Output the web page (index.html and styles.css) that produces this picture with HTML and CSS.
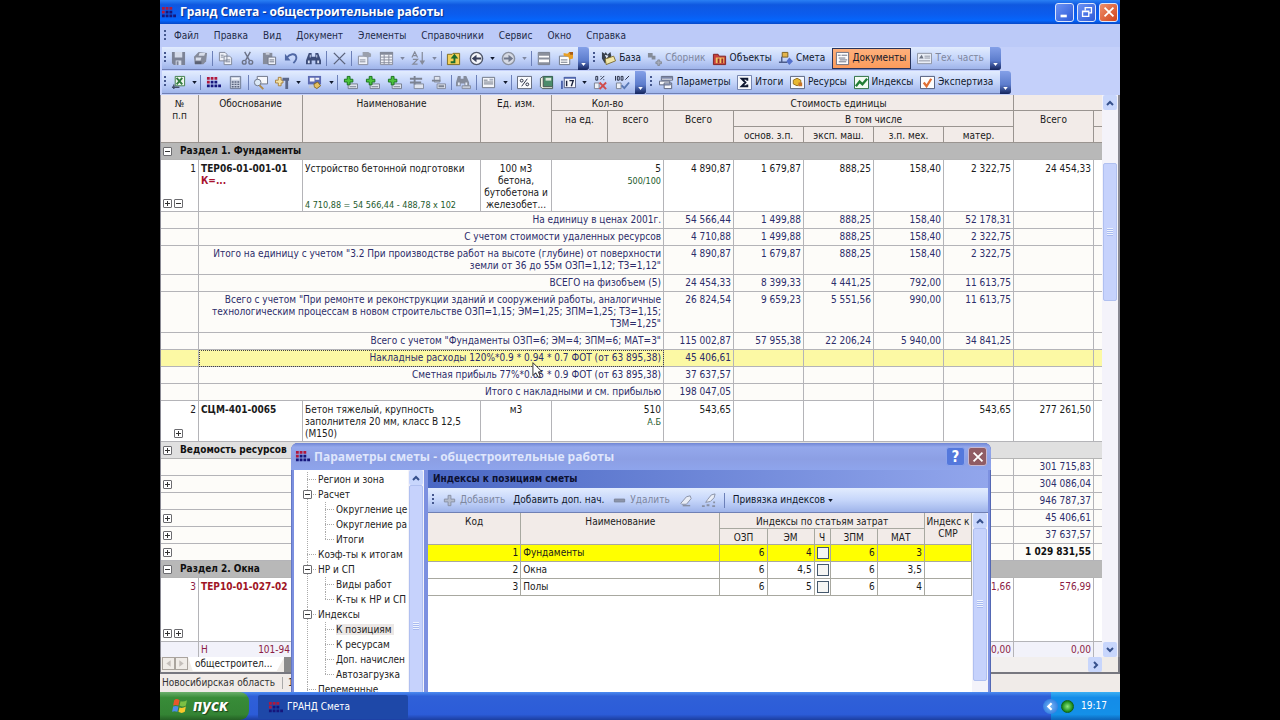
FILE: index.html
```html
<!DOCTYPE html>
<html lang="ru">
<head>
    <meta charset="UTF-8">
    <title>Гранд Смета</title>
    <link rel="stylesheet" href="styles.css">
</head>
<body>

    <!-- Icon sprite -->
    <svg class="sprite" xmlns="http://www.w3.org/2000/svg">
        <symbol id="i-logo" viewBox="0 0 16 16">
            <path fill="#b0183c" d="M1 2h3v3H1zM5 2h3v3H5zM9 2h3v3H9zM1 6h3v3H1z"/>
            <path fill="#16167c" d="M5 6h3v3H5zM9 6h3v3H9zM5 10h3v3H5zM9 10h3v3H9zM13 10h3v3h-3zM1 10h3v3H1z"/>
        </symbol>
        <symbol id="i-save" viewBox="0 0 16 16">
            <path fill="#7c8396" d="M1 1h14v14H3l-2-2z"/><path fill="#d4dbea" d="M4 1h8v6H4zM5 10h6v5H5z"/><path fill="#7c8396" d="M6 11h2v4H6z"/>
        </symbol>
        <symbol id="i-saveall" viewBox="0 0 16 16">
            <path fill="#858b9a" d="M6 1l9 1-1 9-3 3H2L1 6z"/><path fill="#d8deea" d="M7 2h6l-1 3H6zM3 7h6l-1 3H3z"/><path fill="#5c6374" d="M2 11h7v3H2z"/>
        </symbol>
        <symbol id="i-copy" viewBox="0 0 16 16">
            <path fill="#eef1f8" stroke="#7f8698" d="M1.500 1.500h6l2 2v7h-8zM6.500 5.500h6l2 2v7h-8z"/><path stroke="#7f8698" d="M8 9.500h5M8 11.500h5M3 4.500h3M3 6.500h3"/>
        </symbol>
        <symbol id="i-cut" viewBox="0 0 16 16">
            <path fill="none" stroke="#6c7388" stroke-width="1.500" d="M5 1l5 9M11 1L6 10"/><circle cx="4.500" cy="12" r="2" fill="none" stroke="#6c7388" stroke-width="1.500"/><circle cx="11.500" cy="12" r="2" fill="none" stroke="#6c7388" stroke-width="1.500"/>
        </symbol>
        <symbol id="i-paste" viewBox="0 0 16 16">
            <path fill="#868c9b" d="M1 2h10v12H1z"/><path fill="#c9cfdd" d="M4 1h4v3H4z"/><path fill="#eef1f8" stroke="#6f7688" d="M6.500 6.500h8v8h-8z"/><path stroke="#6f7688" d="M8 9.500h5M8 11.500h5"/>
        </symbol>
        <symbol id="i-undo" viewBox="0 0 16 16">
            <path fill="none" stroke="#5068a4" stroke-width="2" d="M3 7c3-4 9-5 10-1 1 3-1 5-3 7"/><path fill="#5068a4" d="M1 3v7h6z"/>
        </symbol>
        <symbol id="i-find" viewBox="0 0 16 16">
            <path fill="#3c4c78" d="M3 2h3v4h4V2h3l3 8v4h-6v-4H6v4H0v-4z"/><path fill="#d7e0f4" d="M2 10h2v3H2zM12 10h2v3h-2zM4 4h1v3H4zM11 4h1v3h-1z"/>
        </symbol>
        <symbol id="i-findg" viewBox="0 0 16 16">
            <path fill="#858c9c" d="M2 1h3v3h3V1h3l3 7v4H9V9H5v3H0V8z"/><path fill="#e4e9f4" d="M2 8h2v3H2zM10 8h2v3h-2z"/><path fill="#c6ccd8" stroke="#858c9c" d="M6.500 11.500h9v3h-9z"/>
        </symbol>
        <symbol id="i-del" viewBox="0 0 16 16">
            <path fill="none" stroke="#5c647c" stroke-width="1.500" d="M2 2l12 12M14 2L2 14"/>
        </symbol>
        <symbol id="i-prop" viewBox="0 0 16 16">
            <path fill="#eef1f8" stroke="#858b9a" d="M1.500 5.500h10v9h-10z"/><path fill="#9aa0ad" d="M6 1h6l3 2v3l-4 1-5-2z"/><path stroke="#858b9a" d="M3 9.500h6M3 11.500h6"/>
        </symbol>
        <symbol id="i-grid" viewBox="0 0 16 16">
            <path fill="#f2f4f9" stroke="#858b9a" d="M1.500 1.500h13v13h-13z"/><path fill="#858b9a" d="M1 1h14v3H1z"/><path stroke="#858b9a" d="M2 6.500h12M2 9.500h12M2 12.500h12M5.500 4v10M10.500 4v10"/>
        </symbol>
        <symbol id="i-sort" viewBox="0 0 16 16">
            <path fill="none" stroke="#858b9a" stroke-width="1.300" d="M1 7l3-6 3 6M2 5h4M2 9h5l-5 5h5M12 1v12"/><path fill="#858b9a" d="M9 10h6l-3 5z"/>
        </symbol>
        <symbol id="i-up" viewBox="0 0 16 16">
            <path fill="#f1cf58" stroke="#7c6a20" d="M1.500 3.500h5l1-1h7v12h-13z"/><path fill="none" stroke="#1c6c2c" stroke-width="2" d="M5 12h4V7"/><path fill="#1c6c2c" d="M5 8l4-5 4 5z"/>
        </symbol>
        <symbol id="i-back" viewBox="0 0 16 16">
            <circle cx="8" cy="8" r="6.500" fill="#f4f6fa" stroke="#50586c" stroke-width="1.500"/><path fill="#38405c" d="M3 8l5-4v3h5v2H8v3z"/>
        </symbol>
        <symbol id="i-fwd" viewBox="0 0 16 16">
            <circle cx="8" cy="8" r="6.500" fill="#d6dae4" stroke="#8c929f" stroke-width="1.500"/><path fill="#70788c" d="M13 8L8 4v3H3v2h5v3z"/>
        </symbol>
        <symbol id="i-split" viewBox="0 0 16 16">
            <path fill="#fdfdfd" stroke="#6d7482" d="M2.500 1.500h12v13h-12z"/><path fill="#8a909c" d="M2 2h12v3H2zM2 7h13v2H2zM2 12h12v2H2z"/>
        </symbol>
        <symbol id="i-card" viewBox="0 0 16 16">
            <path fill="#fdfdfd" stroke="#6d7482" d="M1.500 5.500h11v9h-11z"/><path stroke="#6d7482" d="M3 9.500h7M3 12h7"/><path fill="#e8a028" d="M6 2l4 1 2-2 4 1v6l-4 1-1-3-5-1z"/><path fill="#a85c14" d="M12 1h4v3h-3z"/>
        </symbol>
        <symbol id="i-excel" viewBox="0 0 16 16">
            <path fill="#eef5ee" stroke="#3e7c48" d="M4.500 1.500h10v10h-10z"/><path stroke="#2f7a3c" stroke-width="2" d="M6 3l6 7M12 3l-6 7"/><path fill="none" stroke="#424c68" stroke-width="1.500" d="M1 13h8M3 10v5"/>
        </symbol>
        <symbol id="i-calc" viewBox="0 0 16 16">
            <path fill="#c8d0e0" stroke="#6b7890" d="M2.500 1.500h11v13h-11z"/><path fill="#f4f6fb" d="M4 3h8v2H4z"/><path stroke="#59647e" stroke-width="1.500" stroke-dasharray="2 1" d="M4 7.500h8M4 10h8M4 12.500h8"/>
        </symbol>
        <symbol id="i-look" viewBox="0 0 16 16">
            <path fill="#f6f7fb" stroke="#6b7284" d="M4.500 1.500h11v8h-11z"/><circle cx="5" cy="8" r="3.500" fill="#dce9f7" stroke="#6b7284"/><path stroke="#b08a48" stroke-width="2" d="M7 11l4 4"/>
        </symbol>
        <symbol id="i-tool" viewBox="0 0 16 16">
            <path fill="#f4e2a4" stroke="#a8803c" d="M.5 5.500h3v-3h3v3h2v3h-2v3h-3v-3h-3z"/><path fill="#5a678a" d="M8 3h7v3H8zM11 6h3v9h-3z"/>
        </symbol>
        <symbol id="i-screen" viewBox="0 0 16 16">
            <path fill="#5c6ab2" d="M1 1h14v9H1z"/><path fill="#f4f4f8" d="M3 3h5v4H3zM9 3h4v2H9z"/><path fill="#e6c060" stroke="#806424" d="M7.500 9.500l4-2 3 4-4 3-3-2z"/><path fill="#c3c9d6" d="M2 11h5v3H2z"/>
        </symbol>
        <symbol id="i-add" viewBox="0 0 16 16">
            <path fill="#dfe4ee" stroke="#737b8c" d="M5.500 9.500h10v5h-10z"/><path stroke="#737b8c" d="M7 12.500h7"/><path fill="#4cc43c" stroke="#18701c" d="M4.500 1.500h3v3h3v3h-3v3h-3v-3h-3v-3h3z"/>
        </symbol>
        <symbol id="i-addg" viewBox="0 0 16 16">
            <path fill="#dfe4ee" stroke="#82899a" d="M5.500 9.500h10v5h-10z"/><path stroke="#7c8392" stroke-width="2" d="M1 4h13M1 8h12M6 1v9"/>
        </symbol>
        <symbol id="i-remg" viewBox="0 0 16 16">
            <path fill="#dfe4ee" stroke="#82899a" d="M6.500 9.500h9v5h-9zM3.500 1.500h6v6h-6z"/><path stroke="#7c8392" stroke-width="2" d="M1 6h9M8 12h6"/>
        </symbol>
        <symbol id="i-list" viewBox="0 0 16 16">
            <path fill="#f4f6fa" stroke="#6d7482" d="M1.500 2.500h13v11h-13z"/><path stroke="#6d7482" d="M3 5.500h4M3 7.500h10M3 9.500h10"/><path fill="#a9b0c0" d="M9 4h4v2H9z"/>
        </symbol>
        <symbol id="i-pct" viewBox="0 0 16 16">
            <path fill="#fafbfd" stroke="#5d6478" d="M.5 1.500h15v13H.5z"/><path stroke="#20263c" d="M5 12l6-8" /><circle cx="5" cy="6" r="1.500" fill="none" stroke="#20263c"/><circle cx="11" cy="10" r="1.500" fill="none" stroke="#20263c"/>
        </symbol>
        <symbol id="i-book" viewBox="0 0 16 16">
            <path fill="#4c8c6a" stroke="#2e5a48" d="M4.500 1.500h10v11h-10z"/><path fill="#dbe6d9" d="M7 3h6v3H7z"/><path fill="#f0f2e2" stroke="#4a5a54" d="M4.500 12.500h10v2h-11l-2-2v-9l3-2z"/>
        </symbol>
        <symbol id="i-cal" viewBox="0 0 16 16">
            <path fill="#f7f8fc" stroke="#4f5a80" d="M3.500 2.500h12v11h-12z"/><path fill="#4f66ae" d="M3 2h13v2H3zM0 6h2v9H0z"/><path fill="none" stroke="#1c2440" stroke-width="1.500" d="M6 6v6M9 6h4l-2 6"/>
        </symbol>
        <symbol id="i-zero" viewBox="0 0 16 16">
            <path fill="none" stroke="#20263c" d="M3 1.500h2v4H3zM8 5l4-4M8 1.500h1M11 5h1"/><path fill="#eef1f8" stroke="#7a8192" d="M1.500 8.500h5v6h-5z"/><path stroke="#d04c4c" stroke-width="2" d="M7 8l7 7M14 8l-7 7"/>
        </symbol>
        <symbol id="i-hund" viewBox="0 0 16 16">
            <path fill="none" stroke="#20263c" d="M.5 1v5M2.500 1.500h2v4h-2zM6.500 1.500h2v4h-2zM11 5l4-4"/><path fill="#eef1f8" stroke="#7a8192" d="M1.500 8.500h5v6h-5z"/><path fill="none" stroke="#5878b4" stroke-width="2" d="M7 11l3 3 5-6"/>
        </symbol>
        <symbol id="i-base" viewBox="0 0 16 16">
            <path fill="#38404c" d="M1 1l3 2 1-2 2 3 3-3 1 4-2 6-5 2-3-5z"/><path fill="#f1e6a8" stroke="#7e6e30" d="M4.500 8.500l9-3 2 5-10 4z"/><path fill="#e5ecf8" d="M4 4l4 1-2 3z"/>
        </symbol>
        <symbol id="i-coll" viewBox="0 0 16 16">
            <path fill="#858c98" d="M1 2h5v3h3v4H5V7H1z"/><path fill="#a8aebc" stroke="#858c98" d="M9.500 11.500h2v-2h2v2h2v2h-2v2h-2v-2h-2z"/>
        </symbol>
        <symbol id="i-obj" viewBox="0 0 16 16">
            <path fill="#c8403c" stroke="#7c2020" d="M1.500 3.500h5l1 2h7v9h-13z"/><path fill="#f0c464" d="M4 7h9v6H4z"/><path fill="#a02c28" d="M6 8h2v5H6zM10 8h2v5h-2z"/>
        </symbol>
        <symbol id="i-est" viewBox="0 0 16 16">
            <path fill="#e4b44c" stroke="#7b5f20" d="M4.500 1.500h6v5h-6z"/><path fill="none" stroke="#4c5c8c" stroke-width="1.500" d="M4 6v6H1M4 12h6"/><path fill="#5470cc" d="M12 7l4 4-4 4-3-4z"/>
        </symbol>
        <symbol id="i-doc" viewBox="0 0 16 16">
            <path fill="#fdfdfd" stroke="#666d80" d="M1.500 1.500h13v13h-13z"/><path stroke="#666d80" d="M3 4.500h3M7 4.500h6M4 7.500h7M5 9.500h8M4 11.500h8"/>
        </symbol>
        <symbol id="i-tech" viewBox="0 0 16 16">
            <path fill="#e9edf6" stroke="#8c92a0" d="M.5 2.500h15v11H.5z"/><path fill="#6e7584" d="M2 8l3-4 2 4z"/><path stroke="#8c92a0" d="M8 5.500h6M8 7.500h6M2 10.500h12"/>
        </symbol>
        <symbol id="i-par" viewBox="0 0 16 16">
            <path fill="#f6f7fb" stroke="#59617a" d="M2.500 1.500h12v4h-12zM.5 6.500h11v4H.5zM5.500 8.500h8v6h-8z"/><path fill="#7d88a8" d="M3 2h11v2H3zM6 9h7v2H6z"/>
        </symbol>
        <symbol id="i-sum" viewBox="0 0 16 16">
            <path fill="#f6f8fd" stroke="#6c7ca8" d="M.5.500h15v15H.5z"/><path fill="none" stroke="#101830" stroke-width="2" d="M11 6V4H5l4 4-4 4h6v-2"/>
        </symbol>
        <symbol id="i-res" viewBox="0 0 16 16">
            <path fill="#f6f8fd" stroke="#55617e" d="M.5 1.500h15v13H.5z"/><path fill="#e8b830" stroke="#94701c" d="M3.500 5.500l4-2 4 2v4l-4 2-4-2z"/><path fill="#c87428" d="M9 8h4v4H9z"/>
        </symbol>
        <symbol id="i-idx" viewBox="0 0 16 16">
            <path fill="#f2faf2" stroke="#286c3c" d="M.5 1.500h15v13H.5z"/><path fill="none" stroke="#207c34" stroke-width="2.500" d="M2 12l4-5 3 3 5-6"/>
        </symbol>
        <symbol id="i-exp" viewBox="0 0 16 16">
            <path fill="#fdfdfd" stroke="#4c5878" d="M.5 1.500h15v13H.5z"/><path fill="none" stroke="#e07034" stroke-width="2.500" d="M4 8l3 4 5-8"/>
        </symbol>
        <symbol id="i-plus" viewBox="0 0 16 16">
            <path fill="#b4bccc" stroke="#8890a4" d="M6.500 2.500h3v4h4v3h-4v4h-3v-4h-4v-3h4z"/>
        </symbol>
        <symbol id="i-minus" viewBox="0 0 16 16">
            <path fill="#8c94a8" stroke="#7a8298" d="M2.500 6.500h11v3h-11z"/>
        </symbol>
        <symbol id="i-erase" viewBox="0 0 16 16">
            <path fill="#e9edf6" stroke="#8890a4" d="M3 11l6-7 4-1 1 3-5 6H4z"/><path stroke="#8890a4" stroke-width="1.500" d="M5 13.500h8"/>
        </symbol>
        <symbol id="i-erase2" viewBox="0 0 16 16">
            <path fill="#e9edf6" stroke="#8890a4" d="M7 7l4-5 4-1-1 4-4 4-5 1z"/><path stroke="#8890a4" stroke-width="2" d="M1 14h3M6 13h3M12 14h3M13 10h2"/>
        </symbol>
        <symbol id="i-chup" viewBox="0 0 10 10"><path fill="none" stroke="#36508c" stroke-width="2" d="M2 7l3-3 3 3"/></symbol>
        <symbol id="i-chdown" viewBox="0 0 10 10"><path fill="none" stroke="#36508c" stroke-width="2" d="M2 3l3 3 3-3"/></symbol>
        <symbol id="i-chright" viewBox="0 0 10 10"><path fill="none" stroke="#36508c" stroke-width="2" d="M4 2l3 3-3 3"/></symbol>
        <symbol id="i-caret" viewBox="0 0 6 4"><path fill="currentColor" d="M0 0h6L3 4z"/></symbol>
    </svg>

    <div class="desktop">
        <!-- Main window -->
        <header class="titlebar">
            <svg class="icon"><use href="#i-logo"/></svg>
            <h1>Гранд Смета - общестроительные работы</h1>
            <button class="win-btn" aria-label="Свернуть"><svg viewBox="0 0 18 18"><path fill="#fff" d="M4 12h7v3H4z"/></svg></button>
            <button class="win-btn" aria-label="Восстановить"><svg viewBox="0 0 18 18"><path fill="none" stroke="#fff" stroke-width="1.500" d="M7 7V4h7v6h-3M4 8h7v6H4zM4 8.500h7"/></svg></button>
            <button class="win-btn close" aria-label="Закрыть"><svg viewBox="0 0 18 18"><path stroke="#fff" stroke-width="2" d="M4 4l10 10M14 4L4 14"/></svg></button>
        </header>

        <nav class="menu">
            <span class="grip"></span>
            <button>Файл</button>
            <button>Правка</button>
            <button>Вид</button>
            <button>Документ</button>
            <button>Элементы</button>
            <button>Справочники</button>
            <button>Сервис</button>
            <button>Окно</button>
            <button>Справка</button>
        </nav>

        <div class="toolbars">
            <div class="toolbar bar-std">
                <span class="grip"></span>
                <button aria-label="Сохранить"><svg class="icon"><use href="#i-save"/></svg></button>
                <button aria-label="Сохранить все"><svg class="icon"><use href="#i-saveall"/></svg></button>
                <i class="sep"></i>
                <button aria-label="Копировать"><svg class="icon"><use href="#i-copy"/></svg></button>
                <button aria-label="Вырезать"><svg class="icon"><use href="#i-cut"/></svg></button>
                <button aria-label="Вставить"><svg class="icon"><use href="#i-paste"/></svg></button>
                <button aria-label="Отменить"><svg class="icon"><use href="#i-undo"/></svg></button>
                <button aria-label="Найти"><svg class="icon"><use href="#i-find"/></svg></button>
                <i class="sep"></i>
                <button aria-label="Удалить"><svg class="icon"><use href="#i-del"/></svg></button>
                <i class="sep"></i>
                <button aria-label="Свойства"><svg class="icon"><use href="#i-prop"/></svg></button>
                <button aria-label="Таблица"><svg class="icon"><use href="#i-grid"/></svg></button>
                <button class="drop off" aria-label="Еще"><svg class="caret"><use href="#i-caret"/></svg></button>
                <button aria-label="Сортировка"><svg class="icon"><use href="#i-sort"/></svg></button>
                <button class="drop off" aria-label="Еще"><svg class="caret"><use href="#i-caret"/></svg></button>
                <i class="sep"></i>
                <button aria-label="Вверх"><svg class="icon"><use href="#i-up"/></svg></button>
                <button aria-label="Назад"><svg class="icon"><use href="#i-back"/></svg></button>
                <button class="drop" aria-label="Еще"><svg class="caret"><use href="#i-caret"/></svg></button>
                <button aria-label="Вперед"><svg class="icon"><use href="#i-fwd"/></svg></button>
                <button class="drop off" aria-label="Еще"><svg class="caret"><use href="#i-caret"/></svg></button>
                <i class="sep"></i>
                <button aria-label="Разделить"><svg class="icon"><use href="#i-split"/></svg></button>
                <button aria-label="Карточка"><svg class="icon"><use href="#i-card"/></svg></button>
                <button class="more" aria-label="Параметры панели"><svg class="caret"><use href="#i-caret"/></svg></button>
            </div>
            <div class="toolbar bar-nav">
                <span class="grip"></span>
                <button><svg class="icon"><use href="#i-base"/></svg>База</button>
                <button class="off"><svg class="icon"><use href="#i-coll"/></svg>Сборник</button>
                <button><svg class="icon"><use href="#i-obj"/></svg>Объекты</button>
                <button><svg class="icon"><use href="#i-est"/></svg>Смета</button>
                <button class="active"><svg class="icon"><use href="#i-doc"/></svg>Документы</button>
                <button class="off"><svg class="icon"><use href="#i-tech"/></svg>Тех. часть</button>
                <button class="more" aria-label="Параметры панели"><svg class="caret"><use href="#i-caret"/></svg></button>
            </div>
        </div>

        <div class="toolbars">
            <div class="toolbar bar-doc">
                <span class="grip"></span>
                <button aria-label="Excel"><svg class="icon"><use href="#i-excel"/></svg></button>
                <button class="drop" aria-label="Еще"><svg class="caret"><use href="#i-caret"/></svg></button>
                <i class="sep"></i>
                <button aria-label="Смета"><svg class="icon"><use href="#i-logo"/></svg></button>
                <button aria-label="Калькулятор"><svg class="icon"><use href="#i-calc"/></svg></button>
                <i class="sep"></i>
                <button aria-label="Просмотр"><svg class="icon"><use href="#i-look"/></svg></button>
                <button aria-label="Инструменты"><svg class="icon"><use href="#i-tool"/></svg></button>
                <button class="drop" aria-label="Еще"><svg class="caret"><use href="#i-caret"/></svg></button>
                <button aria-label="Вид"><svg class="icon"><use href="#i-screen"/></svg></button>
                <button class="drop" aria-label="Еще"><svg class="caret"><use href="#i-caret"/></svg></button>
                <i class="sep"></i>
                <button aria-label="Добавить раздел"><svg class="icon"><use href="#i-add"/></svg></button>
                <button aria-label="Добавить позицию"><svg class="icon"><use href="#i-add"/></svg></button>
                <button aria-label="Добавить ресурс"><svg class="icon"><use href="#i-add"/></svg></button>
                <button aria-label="Вставить строку"><svg class="icon"><use href="#i-addg"/></svg></button>
                <button aria-label="Убрать строку"><svg class="icon"><use href="#i-remg"/></svg></button>
                <i class="sep"></i>
                <button aria-label="Поиск"><svg class="icon"><use href="#i-findg"/></svg></button>
                <i class="sep"></i>
                <button aria-label="Список"><svg class="icon"><use href="#i-list"/></svg></button>
                <button class="drop" aria-label="Еще"><svg class="caret"><use href="#i-caret"/></svg></button>
                <i class="sep"></i>
                <button aria-label="Проценты"><svg class="icon"><use href="#i-pct"/></svg></button>
                <button aria-label="Книга"><svg class="icon"><use href="#i-book"/></svg></button>
                <button aria-label="Дата"><svg class="icon"><use href="#i-cal"/></svg></button>
                <button class="drop" aria-label="Еще"><svg class="caret"><use href="#i-caret"/></svg></button>
                <button aria-label="0%"><svg class="icon"><use href="#i-zero"/></svg></button>
                <button aria-label="100%"><svg class="icon"><use href="#i-hund"/></svg></button>
                <button class="more" aria-label="Параметры панели"><svg class="caret"><use href="#i-caret"/></svg></button>
            </div>
            <div class="toolbar bar-calc">
                <span class="grip"></span>
                <button><svg class="icon"><use href="#i-par"/></svg>Параметры</button>
                <button><svg class="icon"><use href="#i-sum"/></svg>Итоги</button>
                <button><svg class="icon"><use href="#i-res"/></svg>Ресурсы</button>
                <button><svg class="icon"><use href="#i-idx"/></svg>Индексы</button>
                <button><svg class="icon"><use href="#i-exp"/></svg>Экспертиза</button>
                <button class="more" aria-label="Параметры панели"><svg class="caret"><use href="#i-caret"/></svg></button>
            </div>
        </div>

        <!-- Estimate table -->
        <main class="sheet">
            <div class="sheet-body">
                <table class="estimate">
                    <colgroup>
                        <col class="c-num"><col class="c-code"><col class="c-name"><col class="c-unit">
                        <col class="c-qty"><col class="c-qty"><col class="c-sum"><col class="c-sum"><col class="c-sum">
                        <col class="c-sum"><col class="c-sum"><col class="c-total"><col class="c-rest">
                    </colgroup>
                    <thead>
                        <tr>
                            <th rowspan="3">№<br>п.п</th>
                            <th rowspan="3">Обоснование</th>
                            <th rowspan="3">Наименование</th>
                            <th rowspan="3">Ед. изм.</th>
                            <th colspan="2">Кол-во</th>
                            <th colspan="5">Стоимость единицы</th>
                            <th colspan="2"></th>
                        </tr>
                        <tr>
                            <th rowspan="2">на ед.</th>
                            <th rowspan="2">всего</th>
                            <th rowspan="2">Всего</th>
                            <th colspan="4">В том числе</th>
                            <th rowspan="2">Всего</th>
                            <th></th>
                        </tr>
                        <tr>
                            <th>основ. з.п.</th>
                            <th>эксп. маш.</th>
                            <th>з.п. мех.</th>
                            <th>матер.</th>
                            <th></th>
                        </tr>
                    </thead>
                    <tbody>
                        <tr class="section">
                            <td colspan="13"><button class="exp minus" aria-label="Свернуть"></button>Раздел 1. Фундаменты</td>
                        </tr>
                        <tr class="item">
                            <td><div class="stack h-52"><span class="n">1</span><span class="exps"><button class="exp plus" aria-label="Развернуть"></button><button class="exp minus" aria-label="Свернуть"></button></span></div></td>
                            <td class="left"><b>ТЕР06-01-001-01</b><br><b class="red">К=...</b></td>
                            <td class="left"><div class="stack h-52">Устройство бетонной подготовки<small>4 710,88 = 54 566,44 - 488,78 x 102</small></div></td>
                            <td class="mid">100 м3 бетона, бутобетона и железобет...</td>
                            <td colspan="2">5<br><small>500/100</small></td>
                            <td>4 890,87</td><td>1 679,87</td><td>888,25</td><td>158,40</td><td>2 322,75</td><td>24 454,33</td><td></td>
                        </tr>
                        <tr class="sub">
                            <td></td><td colspan="5">На единицу в ценах 2001г.</td>
                            <td>54 566,44</td><td>1 499,88</td><td>888,25</td><td>158,40</td><td>52 178,31</td><td></td><td></td>
                        </tr>
                        <tr class="sub">
                            <td></td><td colspan="5">С учетом стоимости удаленных ресурсов</td>
                            <td>4 710,88</td><td>1 499,88</td><td>888,25</td><td>158,40</td><td>2 322,75</td><td></td><td></td>
                        </tr>
                        <tr class="sub">
                            <td></td><td colspan="5">Итого на единицу с учетом "3.2 При производстве работ на высоте (глубине) от поверхности<br>земли от 36 до 55м ОЗП=1,12; ТЗ=1,12"</td>
                            <td>4 890,87</td><td>1 679,87</td><td>888,25</td><td>158,40</td><td>2 322,75</td><td></td><td></td>
                        </tr>
                        <tr class="sub">
                            <td></td><td colspan="5">ВСЕГО на физобъем (5)</td>
                            <td>24 454,33</td><td>8 399,33</td><td>4 441,25</td><td>792,00</td><td>11 613,75</td><td></td><td></td>
                        </tr>
                        <tr class="sub">
                            <td></td><td colspan="5">Всего с учетом "При ремонте и реконструкции зданий и сооружений работы, аналогичные<br>технологическим процессам в новом строительстве ОЗП=1,15; ЭМ=1,25; ЗПМ=1,25; ТЗ=1,15;<br>ТЗМ=1,25"</td>
                            <td>26 824,54</td><td>9 659,23</td><td>5 551,56</td><td>990,00</td><td>11 613,75</td><td></td><td></td>
                        </tr>
                        <tr class="sub">
                            <td></td><td colspan="5">Всего с учетом "Фундаменты ОЗП=6; ЭМ=4; ЗПМ=6; МАТ=3"</td>
                            <td>115 002,87</td><td>57 955,38</td><td>22 206,24</td><td>5 940,00</td><td>34 841,25</td><td></td><td></td>
                        </tr>
                        <tr class="sub current">
                            <td></td><td colspan="5" class="focus">Накладные расходы 120%*0.9 * 0.94 * 0.7 ФОТ (от 63 895,38)</td>
                            <td>45 406,61</td><td></td><td></td><td></td><td></td><td></td><td></td>
                        </tr>
                        <tr class="sub">
                            <td></td><td colspan="5">Сметная прибыль 77%*0.85 * 0.9 ФОТ (от 63 895,38)</td>
                            <td>37 637,57</td><td></td><td></td><td></td><td></td><td></td><td></td>
                        </tr>
                        <tr class="sub">
                            <td></td><td colspan="5">Итого с накладными и см. прибылью</td>
                            <td>198 047,05</td><td></td><td></td><td></td><td></td><td></td><td></td>
                        </tr>
                        <tr class="item">
                            <td><div class="stack h-41"><span class="n">2</span><span class="exps end"><button class="exp plus" aria-label="Развернуть"></button></span></div></td>
                            <td class="left"><b>СЦМ-401-0065</b></td>
                            <td class="left">Бетон тяжелый, крупность<br>заполнителя 20 мм, класс В 12,5<br>(М150)</td>
                            <td class="mid">м3</td>
                            <td colspan="2">510<br><small>А.Б</small></td>
                            <td>543,65</td><td></td><td></td><td></td><td>543,65</td><td>277 261,50</td><td></td>
                        </tr>
                        <tr class="section light">
                            <td colspan="13"><button class="exp plus" aria-label="Развернуть"></button>Ведомость ресурсов</td>
                        </tr>
                        <tr class="sub"><td colspan="11"></td><td>301 715,83</td><td></td></tr>
                        <tr class="sub"><td colspan="11" class="left"><button class="exp plus" aria-label="Развернуть"></button></td><td>304 086,04</td><td></td></tr>
                        <tr class="sub"><td colspan="11"></td><td>946 787,37</td><td></td></tr>
                        <tr class="sub"><td colspan="11" class="left"><button class="exp plus" aria-label="Развернуть"></button></td><td>45 406,61</td><td></td></tr>
                        <tr class="sub"><td colspan="11" class="left"><button class="exp plus" aria-label="Развернуть"></button></td><td>37 637,57</td><td></td></tr>
                        <tr class="sub"><td colspan="11" class="left"><button class="exp plus" aria-label="Развернуть"></button></td><td class="grand">1 029 831,55</td><td></td></tr>
                        <tr class="section">
                            <td colspan="13"><button class="exp minus" aria-label="Свернуть"></button>Раздел 2. Окна</td>
                        </tr>
                        <tr class="item deleted">
                            <td><div class="stack h-65"><span class="n">3</span><span class="exps"><button class="exp plus" aria-label="Развернуть"></button><button class="exp plus" aria-label="Развернуть"></button></span></div></td>
                            <td class="left"><b>ТЕР10-01-027-02</b></td>
                            <td></td><td></td><td colspan="2"></td><td></td><td></td><td></td><td></td><td>1,66</td><td>576,99</td><td></td>
                        </tr>
                        <tr class="deleted resource">
                            <td></td><td><span class="kind">Н<span>101-94</span></span></td>
                            <td></td><td></td><td colspan="2"></td><td></td><td></td><td></td><td></td><td>0,00</td><td>0,00</td><td></td>
                        </tr>
                    </tbody>
                </table>
            </div>
            <div class="vscroll">
                <button aria-label="Вверх"><svg><use href="#i-chup"/></svg></button>
                <span class="track"><i class="thumb main-thumb"></i></span>
                <button aria-label="Вниз"><svg><use href="#i-chdown"/></svg></button>
            </div>
        </main>

        <div class="tabs">
            <button class="tab-nav" aria-label="Назад"><svg viewBox="0 0 10 10"><path fill="#c4beba" d="M7 2v6L3 5z"/></svg></button><button class="tab-nav" aria-label="Вперед"><svg viewBox="0 0 10 10"><path fill="#c4beba" d="M3 2v6l4-3z"/></svg></button>
            <button class="tab">общестроител...</button>
            <span class="tab-rest"></span>
            <button class="hscroll" aria-label="Вправо"><svg><use href="#i-chright"/></svg></button>
        </div>

        <footer class="status"><span>Новосибирская область</span><span>1</span></footer>

        <!-- Taskbar -->
        <div class="taskbar">
            <button class="start">
                <svg viewBox="0 0 16 16"><path fill="#e8562c" d="M3 2q2-2 5 0L7 7Q4 6 2 7z"/><path fill="#7cc043" d="M9 3q3 1 6-1l-1 5q-3 2-6 0z"/><path fill="#4c8cec" d="M2 8q2-1 5 0l-1 5Q3 12 1 13z"/><path fill="#f8c82c" d="M8 9q3 1 6-1l-1 5q-3 2-6 0z"/></svg>
                пуск
            </button>
            <button class="task"><svg class="icon"><use href="#i-logo"/></svg>ГРАНД Смета</button>
            <div class="tray">
                <button class="tray-toggle" aria-label="Показать значки"><svg viewBox="0 0 10 10"><path fill="none" stroke="#fff" stroke-width="2" d="M6 2L3 5l3 3"/></svg></button>
                <i class="agent"></i>
                <time>19:17</time>
            </div>
        </div>

        <!-- Estimate options dialog -->
        <section class="dialog">
            <header class="dialog-title">
                <svg class="icon"><use href="#i-logo"/></svg>
                <h2>Параметры сметы - общестроительные работы</h2>
                <button class="win-btn help" aria-label="Справка">?</button>
                <button class="win-btn shut" aria-label="Закрыть"><svg viewBox="0 0 18 18"><path stroke="#fff" stroke-width="2" d="M4 4l10 10M14 4L4 14"/></svg></button>
            </header>
            <div class="dialog-body">
                <div class="tree-pane">
                    <ul class="tree">
                        <li><a href="#">Регион и зона</a></li>
                        <li><button class="exp minus" aria-label="Свернуть"></button><a href="#">Расчет</a>
                            <ul>
                                <li><a href="#">Округление це</a></li>
                                <li><a href="#">Округление ра</a></li>
                                <li><a href="#">Итоги</a></li>
                            </ul>
                        </li>
                        <li><a href="#">Коэф-ты к итогам</a></li>
                        <li><button class="exp minus" aria-label="Свернуть"></button><a href="#">НР и СП</a>
                            <ul>
                                <li><a href="#">Виды работ</a></li>
                                <li><a href="#">К-ты к НР и СП</a></li>
                            </ul>
                        </li>
                        <li><button class="exp minus" aria-label="Свернуть"></button><a href="#">Индексы</a>
                            <ul>
                                <li><a href="#" class="selected">К позициям</a></li>
                                <li><a href="#">К ресурсам</a></li>
                                <li><a href="#">Доп. начислен</a></li>
                                <li><a href="#">Автозагрузка</a></li>
                            </ul>
                        </li>
                        <li><a href="#">Переменные</a></li>
                    </ul>
                    <div class="vscroll">
                        <button aria-label="Вверх"><svg><use href="#i-chup"/></svg></button>
                        <span class="track"><i class="thumb tree-thumb"></i></span>
                    </div>
                </div>
                <div class="index-pane">
                    <h3>Индексы к позициям сметы</h3>
                    <div class="toolbar bar-index">
                        <span class="grip"></span>
                        <button class="off"><svg class="icon"><use href="#i-plus"/></svg>Добавить</button>
                        <button>Добавить доп. нач.</button>
                        <button class="off"><svg class="icon"><use href="#i-minus"/></svg>Удалить</button>
                        <button aria-label="Очистить"><svg class="icon"><use href="#i-erase"/></svg></button>
                        <button aria-label="Очистить все"><svg class="icon"><use href="#i-erase2"/></svg></button>
                        <i class="sep"></i>
                        <button>Привязка индексов<svg class="caret"><use href="#i-caret"/></svg></button>
                    </div>
                    <div class="index-area">
                        <div class="index-scroll">
                            <table class="indexes">
                                <colgroup>
                                    <col class="d-code"><col class="d-name"><col class="d-val"><col class="d-val">
                                    <col class="d-chk"><col class="d-val"><col class="d-val"><col class="d-val">
                                </colgroup>
                                <thead>
                                    <tr>
                                        <th rowspan="2">Код</th>
                                        <th rowspan="2">Наименование</th>
                                        <th colspan="5">Индексы по статьям затрат</th>
                                        <th rowspan="2">Индекс к СМР</th>
                                    </tr>
                                    <tr><th>ОЗП</th><th>ЭМ</th><th>Ч</th><th>ЗПМ</th><th>МАТ</th></tr>
                                </thead>
                                <tbody>
                                    <tr class="picked"><td>1</td><td class="left">Фундаменты</td><td>6</td><td>4</td><td class="chk"><input type="checkbox" aria-label="Ч, Фундаменты"></td><td>6</td><td>3</td><td></td></tr>
                                    <tr><td>2</td><td class="left">Окна</td><td>6</td><td>4,5</td><td class="chk"><input type="checkbox" aria-label="Ч, Окна"></td><td>6</td><td>3,5</td><td></td></tr>
                                    <tr><td>3</td><td class="left">Полы</td><td>6</td><td>5</td><td class="chk"><input type="checkbox" aria-label="Ч, Полы"></td><td>6</td><td>4</td><td></td></tr>
                                </tbody>
                            </table>
                        </div>
                        <div class="vscroll">
                            <button aria-label="Вверх"><svg><use href="#i-chup"/></svg></button>
                            <span class="track"><i class="thumb index-thumb"></i></span>
                        </div>
                    </div>
                </div>
            </div>
        </section>

        <svg class="pointer" viewBox="0 0 12 18"><path fill="#fff" stroke="#222" d="M1 1v14l3-3 3 5 2-1-2-5h4z"/></svg>
    </div>

</body>
</html>
```
FILE: styles.css
```css
/* General */
* {
    box-sizing: border-box;
}

body {
    margin: 0;
    padding: 0 12.5%;
    background: #000;
    color: #1a1a1a;
    font: 10px/12px "DejaVu Sans Condensed", "Noto Sans", sans-serif;
}

h1, h2, h3, ul {
    margin: 0;
    padding: 0;
}

button {
    padding: 0;
    border: 0;
    background: none;
    color: inherit;
    font: inherit;
    white-space: nowrap;
}

a {
    color: inherit;
    text-decoration: none;
}

.sprite {
    display: none;
}

.icon {
    width: 15px;
    height: 15px;
    flex: none;
}

.caret {
    width: 5px;
    height: 3px;
}

/* Screen */
.desktop {
    position: relative;
    display: flex;
    flex-direction: column;
    height: 100vh;
    overflow: hidden;
    background: #c4d0fa;
}

/* Title bar */
.titlebar {
    display: flex;
    align-items: center;
    gap: 3px;
    height: 24px;
    flex: none;
    padding: 0 2px 0 1px;
    background: linear-gradient(#2a80f4, #0f58e0 20%, #0b5cee 60%, #0566fc 85%, #0648c8);
    color: #fff;
}

.titlebar h1, .dialog-title h2 {
    flex: 1;
    font-family: "Open Sans", "Noto Sans", sans-serif;
    font-size: 12px;
    line-height: 16px;
    padding-left: 1px;
}

.titlebar h1 {
    text-shadow: 1px 1px 1px #0a2f8c;
}

.win-btn {
    display: flex;
    align-items: center;
    justify-content: center;
    width: 19px;
    height: 19px;
    border: 1px solid #dce6fc;
    border-radius: 3px;
    background: linear-gradient(135deg, #6c92f4, #2c5ad8);
}

.win-btn svg {
    width: 16px;
    height: 16px;
}

.win-btn.close {
    background: linear-gradient(135deg, #f0906c, #d0441c);
}

/* Menu and toolbars */
.menu {
    display: flex;
    align-items: center;
    gap: 15px;
    height: 23px;
    flex: none;
    padding-left: 4px;
    background: #bccaf8;
    color: #222a48;
}

.menu .grip {
    margin-right: -7px;
}

.grip {
    width: 2px;
    height: 12px;
    flex: none;
    background: repeating-linear-gradient(#45578e 0 2px, transparent 2px 4px);
}

.toolbars {
    display: flex;
    height: 24px;
    flex: none;
    padding-left: 2px;
}

.toolbar {
    display: flex;
    align-items: center;
    justify-content: space-between;
    height: 23px;
    padding-left: 2px;
    border-bottom: 1px solid #7080b4;
    border-radius: 0 3px 3px 0;
    background: linear-gradient(#e2ecfe, #c6d6fa 50%, #9fb4ea);
    color: #10182c;
}

.toolbar button {
    display: flex;
    align-items: center;
    justify-content: center;
    gap: 3px;
    height: 21px;
    min-width: 20px;
}

.toolbar .drop {
    min-width: 8px;
}

.toolbar .off {
    color: #7e879e;
}

.toolbar .active {
    padding: 0 4px 0 2px;
    border: 1px solid #28345c;
    background: linear-gradient(#fdb07c, #fc9c5c);
}

.toolbar .more {
    align-items: flex-end;
    min-width: 11px;
    height: 23px;
    padding-bottom: 4px;
    border-radius: 0 3px 3px 0;
    background: linear-gradient(#84a0e8, #5c7ccc 60%, #14245c);
    color: #fff;
}

.sep {
    width: 1px;
    height: 15px;
    background: #6c80b8;
}

.bar-std { width: 427px; }
.bar-nav { width: 412px; padding-left: 4px; }
.bar-doc { width: 484px; }
.bar-calc { width: 365px; padding-left: 4px; }

/* Estimate sheet */
.sheet {
    display: flex;
    flex: 1;
    min-height: 0;
    border: solid #8a8a94;
    border-width: 0 2px 0 1px;
    background: #fff;
}

.sheet-body {
    flex: 1;
    min-width: 0;
    overflow: hidden;
}

table {
    width: 100%;
    table-layout: fixed;
    border-collapse: separate;
    border-spacing: 0;
}

.c-num { width: 38px; }
.c-code { width: 104px; }
.c-name { width: 178px; }
.c-unit { width: 71px; }
.c-qty { width: 56px; }
.c-sum { width: 70px; }
.c-total { width: 80px; }
.c-rest { width: 8px; }

th {
    height: 16px;
    padding: 3px 1px 0;
    border: solid #9a9490;
    border-width: 0 1px 1px 0;
    background: #f2ebe8;
    font-weight: normal;
    vertical-align: top;
}

td {
    height: 17px;
    padding: 2px;
    border: solid #b4b4b8;
    border-width: 0 1px 1px 0;
    text-align: right;
    vertical-align: top;
    white-space: nowrap;
}

.estimate td:last-child, .estimate th:last-child {
    border-right: 0;
}

.left {
    text-align: left;
}

.mid {
    text-align: center;
    white-space: normal;
}

.section td {
    padding-left: 2px;
    border-color: #b4b4b4;
    background: #b8b8b8;
    color: #101010;
    font-weight: bold;
    text-align: left;
}

.section .exp {
    margin-right: 8px;
}

.section.light td {
    background: #e0e0e0;
}

.item td {
    padding-top: 3px;
    padding-bottom: 0;
}

.item small {
    color: #1c5a2c;
    font-size: 9px;
}

.sub td {
    background: #fdfcf9;
    color: #2c2c6a;
}

.sub.current td {
    background: #fcf9a4;
}

.sub .focus {
    outline: 1px dotted #444;
    outline-offset: -1px;
}

.sub .grand {
    color: #101010;
    font-weight: bold;
}

.red {
    color: #a81430;
}

.deleted td {
    color: #8c1c44;
}

.deleted b {
    color: #a01424;
}

.resource td {
    background: #f2f2fa;
}

.kind {
    display: flex;
    justify-content: space-between;
    padding-right: 10px;
}

.stack {
    display: flex;
    flex-direction: column;
    justify-content: space-between;
}

.h-52 { height: 48px; }
.h-41 { height: 37px; }
.h-65 { height: 60px; }

.exps {
    display: flex;
    gap: 2px;
    padding-bottom: 3px;
}

.exps.end {
    padding-left: 11px;
}

.exp {
    width: 9px;
    height: 9px;
    padding: 0;
    border: 1px solid #6c6c70;
    border-radius: 1px;
    vertical-align: middle;
}

.exp.minus {
    background: linear-gradient(#333, #333) center / 5px 1px no-repeat #fff;
}

.exp.plus {
    background: linear-gradient(#333, #333) center / 5px 1px no-repeat, linear-gradient(#333, #333) center / 1px 5px no-repeat #fff;
}

/* Scroll bars */
.vscroll {
    display: flex;
    flex-direction: column;
    width: 16px;
    padding: 0 1px;
    flex: none;
    background: #f4f3fa;
}

.vscroll button, .hscroll {
    width: 14px;
    height: 15px;
    border-radius: 2px;
    background: #c8d6fc;
}

.vscroll svg, .hscroll svg {
    display: block;
    width: 10px;
    height: 10px;
    margin: auto;
}

.track {
    display: flex;
    flex-direction: column;
    flex: 1;
}

.thumb {
    width: 100%;
    border: 1px solid #b0c0f0;
    border-radius: 2px;
    background:
        repeating-linear-gradient(#eef3fe 0 1px, #a8baf0 1px 2px) center / 6px 8px no-repeat,
        #c6d2fc;
}

.main-thumb { height: 26%; margin-top: 53px; }
.tree-thumb { flex: 1; margin-bottom: -74px; }
.index-thumb { height: 93%; }

/* Sheet tabs */
.tabs {
    display: flex;
    align-items: flex-start;
    height: 17px;
    flex: none;
    padding: 0 16px 0 1px;
    border: solid #77777f;
    border-width: 0 2px 2px 1px;
    background: #f0ece8;
}

.tab-nav {
    width: 13px;
    height: 13px;
    border: 1px solid #aaa49e;
}

.tab-nav svg {
    display: block;
}

.tab {
    height: 14px;
    padding: 0 12px 0 7px;
    background: #fff;
    clip-path: polygon(0 0, 100% 0, 92% 100%, 5% 100%);
}

.tab-rest {
    flex: 1;
    height: 15px;
    background: linear-gradient(90deg, #8a8a8a 12px, #f2efee 12px);
}

/* Status bar */
.status {
    display: flex;
    gap: 7px;
    align-items: center;
    height: 18px;
    flex: none;
    padding-left: 2px;
    background: #f0ebe8;
    color: #333;
}

.status span + span {
    padding-left: 5px;
    border-left: 1px solid #aaa;
}

/* Taskbar */
.taskbar {
    display: flex;
    height: 28px;
    flex: none;
    background: linear-gradient(#4c8cf0, #2f60d8 15%, #2c5cd8 80%, #1c3ea0);
    color: #fff;
}

.start {
    display: flex;
    align-items: center;
    gap: 5px;
    width: 89px;
    padding-left: 11px;
    border-radius: 0 9px 9px 0;
    background: linear-gradient(#6cb06c, #388c38 20%, #348434 80%, #246024);
    font-size: 15px;
    font-weight: bold;
    font-style: italic;
    text-shadow: 1px 1px 1px #1c401c;
}

.start svg {
    width: 17px;
    height: 17px;
}

.task {
    display: flex;
    align-items: center;
    gap: 4px;
    width: 150px;
    margin: 3px 0 1px 9px;
    padding-left: 10px;
    border-radius: 2px;
    background: #1e48a8;
}

.tray {
    display: flex;
    align-items: center;
    gap: 3px;
    margin-left: auto;
    padding-right: 13px;
    background: linear-gradient(#3cb0f4, #148ce8 20%, #1490e8 80%, #0c64b8);
}

.tray time {
    margin-left: 4px;
}

.tray-toggle {
    width: 15px;
    height: 15px;
    margin-left: -8px;
    border-radius: 50%;
    background: radial-gradient(#78b8f8, #1c6cd8);
}

.tray-toggle svg {
    display: block;
    width: 11px;
    height: 11px;
    margin: auto;
}

.agent {
    width: 13px;
    height: 13px;
    border: 1px solid #146014;
    border-radius: 50%;
    background: radial-gradient(#8ce87c, #1c8c1c 65%);
}

/* Options dialog, lies over the sheet */
.dialog {
    position: absolute;
    left: 131px;
    right: 129px;
    top: 443px;
    bottom: 28px;
    display: flex;
    flex-direction: column;
    padding: 0 3px;
    border-radius: 7px 7px 0 0;
    background: #7c90e0;
    box-shadow: inset 1px 1px 0 #6478c4, inset -1px 0 0 #5468b4;
}

.dialog-title {
    display: flex;
    align-items: center;
    gap: 3px;
    height: 27px;
    flex: none;
    margin: 0 -3px;
    padding: 0 4px;
    border-radius: 7px 7px 0 0;
    background: linear-gradient(#7086d4, #94a8ec 15%, #8c9fe4 60%, #8ea4ec);
    color: #dfe6fc;
}

.dialog .win-btn.help {
    background: #5478dc;
    border-color: #8ca4ec;
    color: #fff;
    font-size: 15px;
    font-weight: bold;
}

.dialog .win-btn.shut {
    background: #905c64;
    border-color: #c8b8d0;
}

.dialog-body {
    display: flex;
    flex: 1;
    min-height: 0;
}

.tree-pane {
    display: flex;
    width: 130px;
    flex: none;
    overflow: hidden;
    background: #fff;
}

.tree {
    flex: 1;
    min-width: 0;
    padding: 2px 0 0 13px;
    overflow: hidden;
    list-style: none;
    line-height: 15px;
    white-space: nowrap;
    color: #222;
}

.tree li {
    list-style: none;
    padding-left: 11px;
    background:
        repeating-linear-gradient(90deg, #aaa 0 1px, transparent 1px 2px) 0 7px / 9px 1px no-repeat,
        repeating-linear-gradient(#aaa 0 1px, transparent 1px 2px) 0 0 / 1px 100% no-repeat;
}

.tree ul {
    padding-left: 7px;
}

.tree ul li:last-child {
    background:
        repeating-linear-gradient(90deg, #aaa 0 1px, transparent 1px 2px) 0 7px / 9px 1px no-repeat,
        repeating-linear-gradient(#aaa 0 1px, transparent 1px 2px) 0 0 / 1px 8px no-repeat;
}

.tree li > .exp {
    float: left;
    margin: 3px 0 0 -15px;
}

.tree .selected {
    padding-right: 3px;
    background: #ece8e6;
}

.index-pane {
    display: flex;
    flex-direction: column;
    flex: 1;
    min-width: 0;
    margin-left: 4px;
}

.index-pane h3 {
    height: 18px;
    flex: none;
    padding-left: 5px;
    background: linear-gradient(90deg, #4a68c4, #92a6ec);
    color: #0c1030;
    font-size: 10px;
    line-height: 18px;
}

.bar-index {
    height: 25px;
    flex: none;
    justify-content: flex-start;
    gap: 8px;
    padding-left: 4px;
    border-radius: 0;
}

.bar-index button {
    min-width: 0;
}

.index-area {
    display: flex;
    flex: 1;
    min-height: 0;
    background: #fff;
}

.index-scroll {
    flex: 1;
    min-width: 0;
}

.indexes td, .indexes th {
    border-color: #a8a8a0;
}

.indexes th {
    padding: 3px 0 0;
}

.indexes .picked td {
    background: #ffff00;
}

.d-code { width: 93px; }
.d-name { width: 199px; }
.d-val { width: 47px; }
.d-chk { width: 16px; }

.indexes .chk {
    padding: 2px;
    line-height: 0;
}

.chk input {
    appearance: none;
    width: 12px;
    height: 12px;
    margin: 0;
    border: 1px solid #44586c;
    background: #f6f6f4;
}

/* Mouse pointer */
.pointer {
    position: absolute;
    left: 372px;
    top: 361px;
    width: 11px;
    height: 18px;
}
```
